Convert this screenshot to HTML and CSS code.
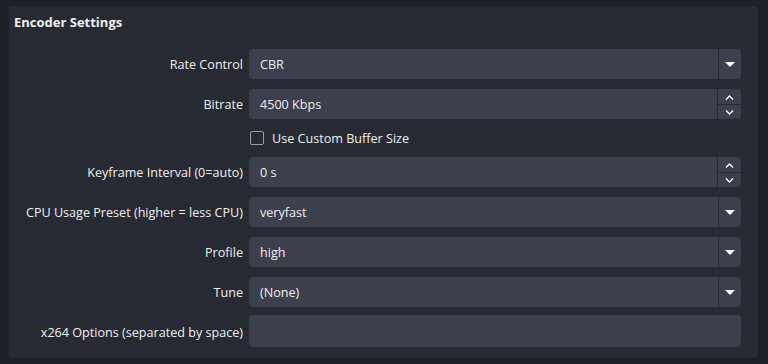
FILE: index.html
```html
<!doctype html>
<html lang="en">
<head>
  <meta charset="UTF-8">
  <title>Encoder Settings</title>
  <link rel="stylesheet" href="styles.css">
</head>
<body>
  <div class="panel">
    <div class="title">Encoder Settings</div>
    <div class="form">
      <label class="label">Rate Control</label>
      <div class="field combo">
        <span class="value">CBR</span>
        <span class="drop"><svg width="10" height="5" viewBox="0 0 10 5"><path d="M0 0h10L5 5z" fill="#fff"/></svg></span>
      </div>

      <label class="label">Bitrate</label>
      <div class="field spin">
        <span class="value">4500 Kbps</span>
        <span class="arrows">
          <span class="up"><svg width="9" height="5" viewBox="0 0 9 5"><path d="M1 4.5l3.5-3.5 3.5 3.5" stroke="#fff" stroke-width="1.4" fill="none"/></svg></span>
          <span class="down"><svg width="9" height="5" viewBox="0 0 9 5"><path d="M1 0.5l3.5 3.5 3.5-3.5" stroke="#fff" stroke-width="1.4" fill="none"/></svg></span>
        </span>
      </div>

      <span></span>
      <label class="check"><span class="box"></span>Use Custom Buffer Size</label>

      <label class="label">Keyframe Interval (0=auto)</label>
      <div class="field spin">
        <span class="value">0 s</span>
        <span class="arrows">
          <span class="up"><svg width="9" height="5" viewBox="0 0 9 5"><path d="M1 4.5l3.5-3.5 3.5 3.5" stroke="#fff" stroke-width="1.4" fill="none"/></svg></span>
          <span class="down"><svg width="9" height="5" viewBox="0 0 9 5"><path d="M1 0.5l3.5 3.5 3.5-3.5" stroke="#fff" stroke-width="1.4" fill="none"/></svg></span>
        </span>
      </div>

      <label class="label">CPU Usage Preset (higher = less CPU)</label>
      <div class="field combo">
        <span class="value">veryfast</span>
        <span class="drop"><svg width="10" height="5" viewBox="0 0 10 5"><path d="M0 0h10L5 5z" fill="#fff"/></svg></span>
      </div>

      <label class="label">Profile</label>
      <div class="field combo">
        <span class="value">high</span>
        <span class="drop"><svg width="10" height="5" viewBox="0 0 10 5"><path d="M0 0h10L5 5z" fill="#fff"/></svg></span>
      </div>

      <label class="label">Tune</label>
      <div class="field combo">
        <span class="value">(None)</span>
        <span class="drop"><svg width="10" height="5" viewBox="0 0 10 5"><path d="M0 0h10L5 5z" fill="#fff"/></svg></span>
      </div>

      <label class="label">x264 Options (separated by space)</label>
      <div class="field text"></div>
    </div>
  </div>
</body>
</html>
```

FILE: styles.css
```css
body {
  margin: 0;
  background: #1e2027;
  font-family: "Open Sans", sans-serif;
  font-size: 12.6px;
  color: #f0f0f0;
  padding: 6px 10px 6px 9px;
}
.panel {
  background: #272a33;
  border-radius: 4px;
  height: 352px;
  box-sizing: border-box;
  padding: 6px 17px 0 5px;
}
.title {
  font-weight: bold;
  font-size: 13px;
  height: 20px;
  line-height: 20px;
}
.form {
  display: grid;
  grid-template-columns: 229px 492px;
  column-gap: 6px;
  row-gap: 10px;
  margin-top: 17px;
  align-items: center;
}
.label {
  text-align: right;
}
.field {
  background: #3c3f4c;
  border-radius: 4px;
  height: 30px;
  display: flex;
  align-items: center;
}
.field.text {
  height: 32px;
  margin-top: -2px;
}
.value {
  flex: 1;
  padding-left: 11px;
}
.drop {
  width: 23px;
  height: 100%;
  border-left: 1px solid #272a33;
  display: flex;
  align-items: center;
  justify-content: center;
  box-sizing: border-box;
}
.arrows {
  width: 24px;
  height: 100%;
  border-left: 1px solid #272a33;
  display: flex;
  flex-direction: column;
  box-sizing: border-box;
}
.arrows span {
  flex: 1;
  display: flex;
  align-items: center;
  justify-content: center;
}
.arrows .up {
  border-bottom: 1px solid #272a33;
  padding-top: 1px;
}
.check {
  display: flex;
  align-items: center;
  height: 18px;
  padding-left: 1px;
}
.box {
  width: 12px;
  height: 12px;
  border: 1px solid #9a9ca4;
  border-radius: 2px;
  margin-right: 8px;
}
```
